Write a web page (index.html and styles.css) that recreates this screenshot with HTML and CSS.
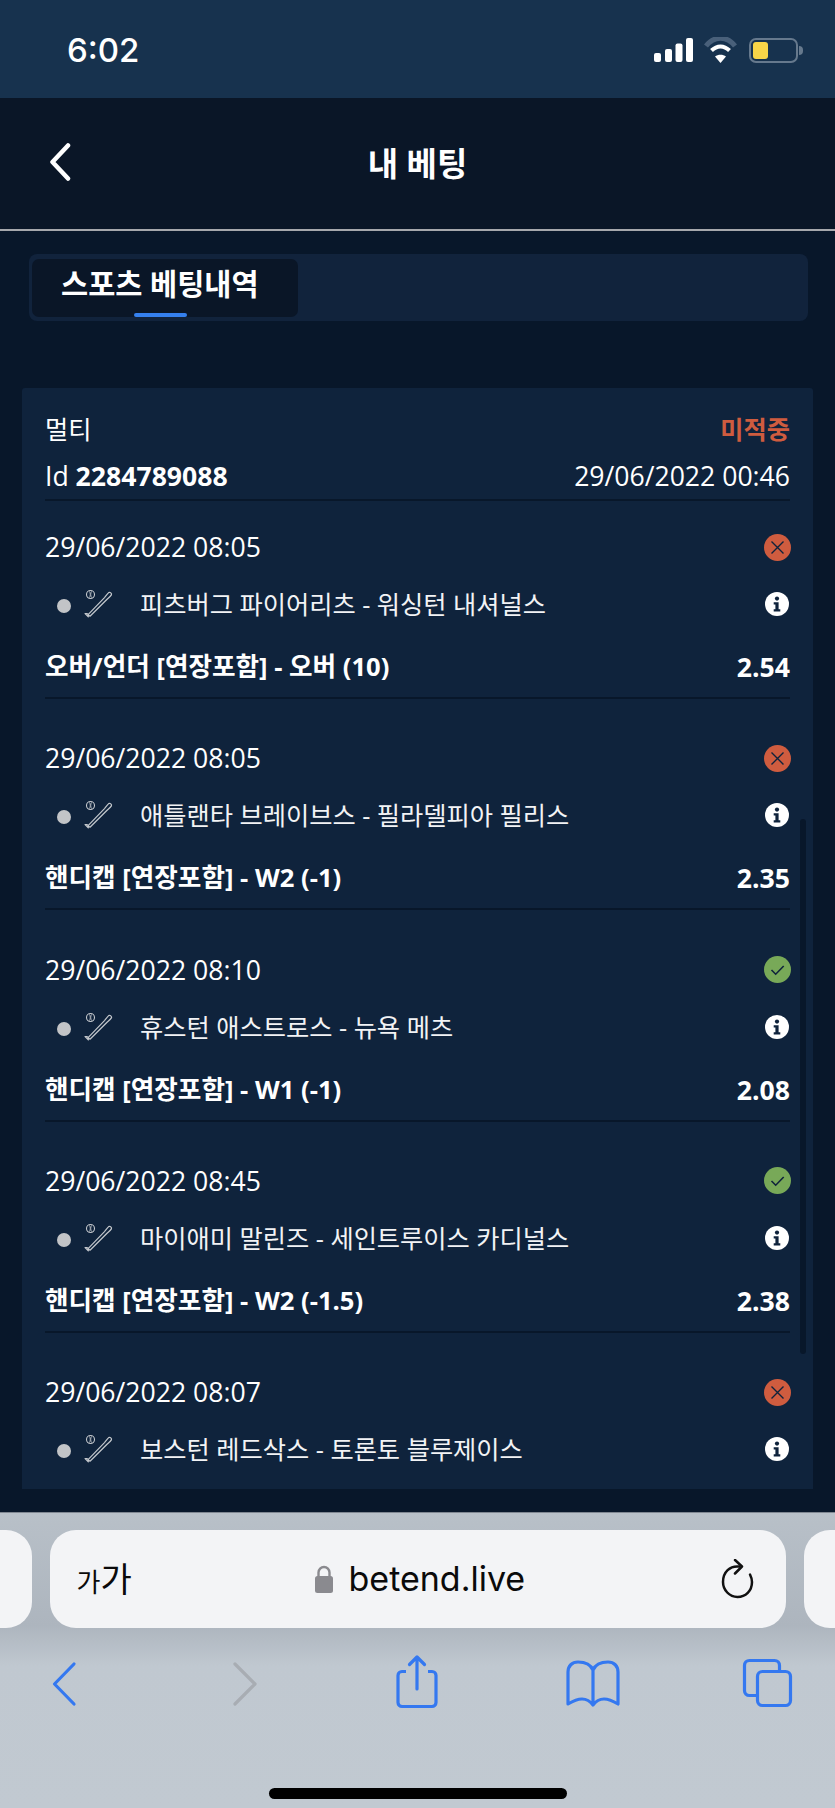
FILE: index.html
```html
<!DOCTYPE html>
<html lang="ko">
<head>
<meta charset="utf-8">
<title>내 베팅</title>
<link rel="stylesheet" href="styles.css">
</head>
<body>
<svg class="defs" width="0" height="0" aria-hidden="true">
  <symbol id="bat" viewBox="0 0 30 30">
    <circle cx="6.5" cy="5.5" r="4" fill="none" stroke="#c4c8cd" stroke-width="1.1"/>
    <path d="M5.5 2.400c1 1.800 1 4.400 0 6.200M7.500 2.400c-1 1.800-1 4.400 0 6.200" fill="none" stroke="#c4c8cd" stroke-width=".8"/>
    <path d="M3.200 24.500l.9 1.200.2 2.200-3.200-3.400 2.100 0zM4.100 25.700L20.500 8.600c1.500-1.700 3-4 4.200-5 1.300-1 3.400.9 2.700 2.300-.8 1.500-3 3.100-4.600 4.600L6 27.200z" fill="none" stroke="#c4c8cd" stroke-width="1.200" stroke-linejoin="round"/>
  </symbol>
  <symbol id="info" viewBox="0 0 24 24">
    <circle cx="12" cy="12" r="12" fill="#fff"/>
    <circle cx="12" cy="6.600" r="2.100" fill="#0f233c"/>
    <path d="M8.700 10.200h4.900v7h1.700v2.200H8.700v-2.200h1.700v-4.800H8.700z" fill="#0f233c"/>
  </symbol>
  <symbol id="lost" viewBox="0 0 27 27">
    <circle cx="13.500" cy="13.500" r="13.500" fill="#cf5c3f"/>
    <path d="M7.500 7.500l12 12M19.500 7.500l-12 12" stroke="#0f233c" stroke-width="1.400" fill="none"/>
  </symbol>
  <symbol id="won" viewBox="0 0 27 27">
    <circle cx="13.500" cy="13.500" r="13.500" fill="#78a958"/>
    <path d="M7.500 14l4.200 4.200 8-8.200" stroke="#0f233c" stroke-width="1.600" fill="none"/>
  </symbol>
</svg>

<div class="phone">
  <div class="status">
    <span class="time">6:02</span>
    <div class="status-icons">
      <svg class="signal" width="39" height="24" viewBox="0 0 39 24"><rect x="0" y="15" width="7" height="9" rx="2" fill="#fff"/><rect x="11" y="11" width="7" height="13" rx="2" fill="#fff"/><rect x="21.500" y="5.500" width="7" height="18.500" rx="2" fill="#fff"/><rect x="32" y="0" width="7" height="24" rx="2" fill="#fff"/></svg>
      <svg class="wifi" width="33" height="26" viewBox="0 0 33 26"><path d="M2 9C10-1.500 23-1.500 31 9" fill="none" stroke="#49607a" stroke-width="5"/><path d="M7.500 13.500C13 8 20 8 25.500 13.500" fill="none" stroke="#fff" stroke-width="4"/><path d="M16.500 26l-5.500-6.500c3-2.500 8-2.500 11 0z" fill="#fff"/></svg>
      <div class="battery"><div class="battery-fill"></div></div>
      <div class="battery-nub"></div>
    </div>
  </div>

  <header class="topbar">
    <svg class="back" width="24" height="38" viewBox="0 0 24 38"><path d="M20 2.500L4.500 19 20 35.500" fill="none" stroke="#fff" stroke-width="4.500" stroke-linecap="round" stroke-linejoin="round"/></svg>
    <h1 class="title">내 베팅</h1>
  </header>

  <main class="content">
    <div class="tabs">
      <div class="tab">스포츠 베팅내역<span class="tab-mark"></span></div>
    </div>

    <section class="card">
      <div class="card-head">
        <div class="row"><span class="hangul">멀티</span><span class="hangul result-lost">미적중</span></div>
        <div class="row row-id"><span>Id <b>2284789088</b></span><span>29/06/2022 00:46</span></div>
      </div>

      <article class="bet">
        <div class="row"><span>29/06/2022 08:05</span><svg class="mark" width="27" height="27"><use href="#lost"/></svg></div>
        <div class="row match"><span class="dot"></span><svg class="bat" width="30" height="30"><use href="#bat"/></svg><span class="teams">피츠버그 파이어리츠 - 워싱턴 내셔널스</span><svg class="info" width="24" height="24"><use href="#info"/></svg></div>
        <div class="row market"><span class="label">오버/언더 [연장포함] - 오버 (10)</span><span>2.54</span></div>
      </article>

      <article class="bet">
        <div class="row"><span>29/06/2022 08:05</span><svg class="mark" width="27" height="27"><use href="#lost"/></svg></div>
        <div class="row match"><span class="dot"></span><svg class="bat" width="30" height="30"><use href="#bat"/></svg><span class="teams">애틀랜타 브레이브스 - 필라델피아 필리스</span><svg class="info" width="24" height="24"><use href="#info"/></svg></div>
        <div class="row market"><span class="label">핸디캡 [연장포함] - W2 (-1)</span><span>2.35</span></div>
      </article>

      <article class="bet">
        <div class="row"><span>29/06/2022 08:10</span><svg class="mark" width="27" height="27"><use href="#won"/></svg></div>
        <div class="row match"><span class="dot"></span><svg class="bat" width="30" height="30"><use href="#bat"/></svg><span class="teams">휴스턴 애스트로스 - 뉴욕 메츠</span><svg class="info" width="24" height="24"><use href="#info"/></svg></div>
        <div class="row market"><span class="label">핸디캡 [연장포함] - W1 (-1)</span><span>2.08</span></div>
      </article>

      <article class="bet">
        <div class="row"><span>29/06/2022 08:45</span><svg class="mark" width="27" height="27"><use href="#won"/></svg></div>
        <div class="row match"><span class="dot"></span><svg class="bat" width="30" height="30"><use href="#bat"/></svg><span class="teams">마이애미 말린즈 - 세인트루이스 카디널스</span><svg class="info" width="24" height="24"><use href="#info"/></svg></div>
        <div class="row market"><span class="label">핸디캡 [연장포함] - W2 (-1.5)</span><span>2.38</span></div>
      </article>

      <article class="bet">
        <div class="row"><span>29/06/2022 08:07</span><svg class="mark" width="27" height="27"><use href="#lost"/></svg></div>
        <div class="row match"><span class="dot"></span><svg class="bat" width="30" height="30"><use href="#bat"/></svg><span class="teams">보스턴 레드삭스 - 토론토 블루제이스</span><svg class="info" width="24" height="24"><use href="#info"/></svg></div>
      </article>

      <div class="scrollbar"></div>
    </section>
  </main>

  <footer class="safari">
    <div class="pills">
      <div class="pill"></div>
      <div class="pill pill-main">
        <span class="aa"><small>가</small>가</span>
        <span class="address">
          <svg width="20" height="28" viewBox="0 0 20 28"><path d="M4.500 12V7.500a5.500 5.500 0 0 1 11 0V12" fill="none" stroke="#8a8a8f" stroke-width="2.400"/><rect x="1" y="11" width="18" height="17" rx="2.500" fill="#8a8a8f"/></svg>
          <span>betend.live</span>
        </span>
        <svg class="reload" width="33" height="40" viewBox="0 0 33 40"><path d="M18 7.500C9 6.500 2 13 2 23c0 8 6.500 15 14.500 15S31 32 31 23c0-3-1-5.500-2-7.500" fill="none" stroke="#111" stroke-width="2.500" stroke-linecap="round"/><path d="M14 1l7 6.500-7 7" fill="none" stroke="#111" stroke-width="2.500" stroke-linecap="round" stroke-linejoin="round"/></svg>
      </div>
      <div class="pill"></div>
    </div>
    <nav class="tools">
      <svg width="64" height="60" viewBox="0 0 64 60"><path d="M42 10L22.500 30 42 50" fill="none" stroke="#3478f0" stroke-width="3.200" stroke-linecap="round" stroke-linejoin="round"/></svg>
      <svg width="64" height="60" viewBox="0 0 64 60"><path d="M22 10l20 20-20 20" fill="none" stroke="#a8adb3" stroke-width="3.200" stroke-linecap="round" stroke-linejoin="round"/></svg>
      <svg width="64" height="60" viewBox="0 0 64 60"><path d="M21 17.500h-4a4 4 0 0 0-4 4v27a4 4 0 0 0 4 4h30a4 4 0 0 0 4-4v-27a4 4 0 0 0-4-4h-4" fill="none" stroke="#3478f0" stroke-width="3.200"/><path d="M32 35V3M24.500 10.500L32 3l7.500 7.500" fill="none" stroke="#3478f0" stroke-width="3.200" stroke-linecap="round" stroke-linejoin="round"/></svg>
      <svg width="64" height="60" viewBox="0 0 64 60"><path d="M32 16C29 9 23 8 17 8c-6 0-10 4-10 10v32c5-3 9-5 14-5 5 0 8 2 11 6 3-4 6-6 11-6 5 0 9 2 14 5V18c0-6-4-10-10-10-6 0-12 1-15 8zM32 16v34" fill="none" stroke="#3478f0" stroke-width="3.200" stroke-linejoin="round"/></svg>
      <svg width="64" height="60" viewBox="0 0 64 60"><path d="M21.500 41.500h-8c-3 0-5-2-5-5v-25c0-3 2-5 5-5h25c3 0 5 2 5 5v6" fill="none" stroke="#3478f0" stroke-width="3.200"/><rect x="21.500" y="17.500" width="33" height="34" rx="5" fill="none" stroke="#3478f0" stroke-width="3.200"/></svg>
    </nav>
    <div class="home"></div>
  </footer>
</div>
</body>
</html>
```
FILE: styles.css
```css
* { box-sizing: border-box; }
html, body { margin: 0; padding: 0; background: #0a1627; }
.defs { position: absolute; }

.phone {
  width: 835px;
  height: 1808px;
  display: flex;
  flex-direction: column;
  overflow: hidden;
  font-family: "Open Sans", "Noto Sans CJK KR", sans-serif;
  color: #fff;
}

/* iOS status bar */
.status {
  flex: 0 0 98px;
  background: #17324e;
  display: flex;
  align-items: flex-start;
  justify-content: space-between;
  padding: 30px 32px 0 67px;
}
.time {
  font-family: Inter, "Liberation Sans", sans-serif;
  font-size: 33px;
  font-weight: 500;
  line-height: 40px;
}
.status-icons { display: flex; align-items: flex-start; padding-top: 8px; }
.signal { margin-right: 11px; }
.wifi { margin-right: 12px; margin-top: -1px; }
.battery {
  width: 49px;
  height: 25px;
  border: 2px solid #66798d;
  border-radius: 7px;
  padding: 2px;
}
.battery-fill { width: 15px; height: 17px; background: #f8d548; border-radius: 3px; }
.battery-nub { width: 4px; height: 9px; margin: 8px 0 0 1px; background: #66798d; border-radius: 0 4px 4px 0; }

/* Page header */
.topbar {
  flex: 0 0 133px;
  position: relative;
  display: flex;
  align-items: center;
  justify-content: center;
  background: #0a1627;
  border-bottom: 2px solid #a6a8ac;
}
.back { position: absolute; left: 48px; top: 45px; }
.title { margin: 0; font-size: 33px; font-weight: 700; line-height: 44px; }

.content { flex: 1; background: #08172a; padding: 23px 22px 0; min-height: 0; }

.tabs {
  margin: 0 5px 0 7px;
  height: 67px;
  background: #11233c;
  border-radius: 8px;
  padding: 5px 3px;
}
.tab {
  position: relative;
  width: 266px;
  height: 58px;
  background: #0a1627;
  border-radius: 7px;
  padding-left: 29px;
  font-size: 29.500px;
  font-weight: 700;
  line-height: 50px;
  white-space: nowrap;
}
.tab-mark {
  position: absolute;
  left: 102px;
  bottom: 0;
  width: 53px;
  height: 4px;
  background: #3580ee;
  border-radius: 2px;
}

/* Bet card */
.card {
  position: relative;
  height: 1101px;
  margin-top: 67px;
  background: #0f233c;
  border-radius: 3px 3px 0 0;
  padding: 23px 23px 0;
  overflow: hidden;
  font-size: 26.600px;
}
.card-head { border-bottom: 2px solid #08172a; padding-bottom: 5px; }
.row {
  display: flex;
  align-items: center;
  justify-content: space-between;
  height: 36px;
  line-height: 36px;
  white-space: nowrap;
}
.row-id { margin-top: 11px; }
.hangul { font-size: 25.250px; }
.result-lost { color: #cf5c3f; font-weight: 700; }

.bet { padding: 28px 0 12px; margin-bottom: 13.300px; border-bottom: 2px solid #08172a; }
.bet:last-of-type { border-bottom: 0; }
.mark { margin-right: -1px; }
.match { margin-top: 21px; justify-content: flex-start; }
.dot { width: 14px; height: 14px; border-radius: 50%; background: #c2c4c7; margin: 4px 0 0 12px; }
.bat { margin: 0 0 0 13px; }
.teams { margin-left: 26px; flex: 1; color: #f2f3f5; font-size: 25.250px; }
.info { margin-right: 1px; }
.market { margin-top: 27px; font-weight: 700; }
.label { font-size: 25.600px; }

.scrollbar {
  position: absolute;
  left: 778px;
  top: 431px;
  width: 6px;
  height: 535px;
  background: #08172a;
  border-radius: 3px;
}

/* Safari toolbar */
.safari {
  flex: 0 0 296px;
  background: linear-gradient(#b8c0c8, #adb5be 38%, #c0c8d0 52%, #c1c9d1);
  border-top: 1px solid #7f8791;
  color: #0a0a0a;
  font-family: Inter, "Liberation Sans", sans-serif;
}
.pills {
  display: flex;
  justify-content: center;
  gap: 18px;
  margin-top: 17px;
  height: 98px;
}
.pill {
  flex: 0 0 100px;
  background: #f3f4f6;
  border-radius: 26px;
}
.pill.pill-main {
  flex: 0 0 736px;
  position: relative;
  display: flex;
  align-items: center;
  justify-content: space-between;
  padding: 0 32px 0 27px;
}
.aa { font-family: "Noto Sans CJK KR", sans-serif; font-size: 34px; line-height: 40px; }
.aa small { font-size: 26px; }
.address {
  position: absolute;
  left: 264px;
  top: 29px;
  display: flex;
  align-items: center;
  gap: 15px;
  font-size: 34px;
  line-height: 40px;
}
.tools {
  display: grid;
  grid-template-columns: 181px 172px 176px 175px 64px;
  padding-left: 32px;
  margin-top: 26px;
  height: 60px;
}
.home {
  width: 298px;
  height: 11px;
  margin: 74px 0 0 269px;
  background: #000;
  border-radius: 6px;
}
```
